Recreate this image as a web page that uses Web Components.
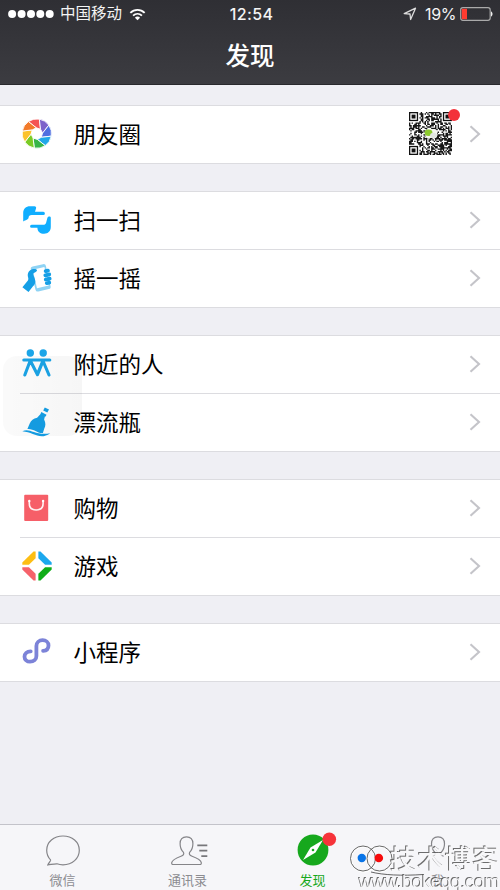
<!DOCTYPE html>
<html lang="zh-CN">
<head>
<meta charset="utf-8">
<title>发现</title>
<style>
html,body{margin:0;padding:0}
body{width:500px;height:890px;overflow:hidden;font-family:"Liberation Sans","Noto Sans CJK SC",sans-serif;background:#efeff4}
</style>
</head>
<body>
<discover-app></discover-app>
<script>
const define = (name, html, setup) => customElements.define(name, class extends HTMLElement {
  connectedCallback() {
    if (this.shadowRoot) return;
    const t = document.createElement('template');
    t.innerHTML = html;
    this.attachShadow({mode: 'open'}).append(t.content.cloneNode(true));
    if (setup) setup(this, this.shadowRoot);
  }
});

const ICONS = {
  moments: ``,
  scan: `<path fill="#10aeff" d="M1.2 16.5V8C1.2 4 4 1.3 8 1.3h4.5c1.3 0 2 1 1.5 2.2l-1 3.3h8.3a1.6 1.6 0 0 1 0 3.2H9.7c-2 0-3.2 1.2-3.2 3.2-1.500 2-4 2.200-5.300 3.300z"/><path fill="#10aeff" d="M28.8 12.8v9.3c0 4-2.8 6.7-6.7 6.7-3.9 0-6.5-2-6.7-6H9.6a1.5 1.5 0 0 1 0-3.1h11.6c1.6 0 2.600-.8 3-2.300l1.200-4.600c.8-1.700 3.400-1.600 3.400 0z"/>`,
  shake: `<g transform="rotate(-13 19 15)"><rect x="11" y="2" width="15.500" height="25.500" rx="2.400" fill="#8fd3f4"/><rect x="12.800" y="5" width="12" height="19" fill="#fff"/></g><path fill="#159fe6" d="M.4 24.2l5.500-6.800c.6-1 .5-2 .1-3.400-.8-3.200.5-6.500 3.600-7.500 2.800-.9 5.200-.3 5.400.8.2 1.200-1.700 1.900-3.200 2.800-1.200.8-.5 2 .5 4.300 1.700 4 1.100 6.400-1.300 8.800L6.500 29z"/><g stroke="#159fe6" stroke-width="3.700" stroke-linecap="round"><path d="M23.600 8.100l2.400-.5M23.300 12.400l4-.9M23.700 16.500l4-.9M24.700 20.200l2.600-.6"/></g>`,
  nearby: `<g fill="#1ba5e8"><circle cx="8.300" cy="4" r="3.700"/><circle cx="21.200" cy="4" r="3.700"/></g><path d="M1.800 11h26M8.500 11L2.800 26M8.500 12l7 13.700L21 12l6 14M20.800 12L15.500 25" fill="none" stroke="#1ba5e8" stroke-width="3.100" stroke-linecap="round" stroke-linejoin="round"/>`,
  bottle: `<path fill="#159fe6" d="M22.800 .4l4.200 2.200-1.700 3-4.100-2zM19.300 4.900l5.200 2.800-.8 1.900-.8-.1-.8 2.900c1.700 3.400 1.700 6.300.1 9.300l-1.300 4.300C15.800 27 12.300 21.500 5.400 22l2.200-5.200c1.400-3.500 3.900-5.400 7.500-6l3-3.300.4-.6z"/><path fill="#159fe6" d="M.3 24.300c7.500-4.200 12.400 4.600 27.900 1.900C18 33.600 11.800 25.300.3 24.300z"/>`,
  shop: `<rect x="2.200" y="1.700" width="24" height="26.300" rx="1" fill="#f65f68"/><path d="M7.300 8v2.500c0 4.200 2.900 6.500 6.900 6.500s6.900-2.300 6.900-6.500V8" fill="none" stroke="#fff3f3" stroke-width="1.600"/><circle cx="7.300" cy="8" r="1.200" fill="#fff"/><circle cx="21.100" cy="8" r="1.200" fill="#fff"/>`,
  games: `<path fill="#fdbe14" d="M11.500.4h2.100v6.800L6.900 13.700H.3v-2.200z"/><path fill="#1ca8ee" d="M18.500.4h-2.100v6.800l6.700 6.500h6.600v-2.200z"/><path fill="#f6626b" d="M11.500 29.600h2.100v-6.800L6.900 16.300H.3v2.200z"/><path fill="#10ad18" d="M18.500 29.600h-2.100v-6.800l6.700-6.500h6.600v2.200z"/>`,
  mini: `<path d="M8.700 14.300C4.900 14.400 2.500 16.500 2.500 19.700c0 3 2.500 5 5.500 5 3.800 0 6.400-2.200 6.400-5.700V9c0-3.300 2.700-5.800 6.200-5.800 3.300 0 5.900 2.100 5.900 5.200 0 3.200-2.200 5.200-5.400 5.500" fill="none" stroke="#7c83d8" stroke-width="3.800" stroke-linecap="round"/>`
};

define('status-bar', `<style>
:host{display:grid;grid-template-columns:1fr auto 1fr;align-items:center;height:28px;color:#f4f4f4;font:15.5px/28px Inter,"Noto Sans CJK SC",sans-serif}
div{display:flex;align-items:center}
.l{padding-left:8px}.r{justify-content:flex-end;padding-right:7px}
b{font-weight:500;font-size:16px;letter-spacing:.4px;padding-left:3px}
svg{display:block;flex:none}.c{margin:0 7px 0 6px}.p{margin:0 4px 0 8px;font-size:16px;letter-spacing:-.4px}
</style>
<div class="l"><svg width="46" height="10" fill="#fff"><circle cx="4.100" cy="5" r="4"/><circle cx="13.600" cy="5" r="4"/><circle cx="23" cy="5" r="4"/><circle cx="32.300" cy="5" r="4"/><circle cx="41.700" cy="5" r="4"/></svg>
<span class="c">中国移动</span><svg width="17" height="13" viewBox="0 0 18 14" fill="none" stroke="#fff" stroke-width="2"><path d="M1.300 5.200C5.700.9 12.300.9 16.700 5.200M4.200 8.200c2.800-2.600 6.800-2.600 9.600 0"/><path d="M6.200 10.400c1.600-1.500 4-1.500 5.600 0L9 13.200z" fill="#fff" stroke="none"/></svg></div>
<b>12:54</b>
<div class="r"><svg width="14" height="14" viewBox="0 0 14 14"><path d="M1.200 6.600L12.500 1.200 7.600 12.500 7 7z" fill="none" stroke="#ddd" stroke-width="1.300" stroke-linejoin="round"/></svg><span class="p">19%</span><svg width="33" height="14"><rect x=".7" y=".7" width="29.500" height="12.600" rx="2.200" fill="none" stroke="#aaa" stroke-width="1.200"/><rect x="1.800" y="1.800" width="5.200" height="10.400" fill="#ff3b30"/><path d="M31 4.500c2 .5 2 4.500 0 5z" fill="#eee"/></svg></div>`);

define('nav-header', `<style>
:host{display:block;height:85px;background:linear-gradient(#2f2f34,#3c3c41);box-sizing:border-box;box-shadow:inset 0 -1px #29292d}
h1{margin:0;color:#fff;text-align:center;font:500 24.5px/54px "Noto Sans CJK SC",sans-serif}
</style><status-bar></status-bar><h1><slot></slot></h1>`);

define('cell-group', `<style>
:host{display:flex;flex-direction:column;background:#fff;border:solid #dcdce0;border-width:1px 0;box-sizing:border-box}
</style><slot></slot>`);

define('list-cell', `<style>
:host{display:flex;align-items:center;box-sizing:border-box;height:57px;padding:0 19px 2px 22px}
:host([next]){height:58px;padding-bottom:0;background:linear-gradient(#dcdce0,#dcdce0) 20px 0/480px 1px no-repeat}
.i{width:30px;height:30px;flex:none;overflow:visible}
.t{flex:1;padding:0 0 2px 21.5px;font:22.5px/52px "Noto Sans CJK SC",sans-serif;color:#000}
.a{width:12px;height:18px;flex:none;margin-left:16px}
</style><svg class="i" viewBox="0 0 30 30"></svg><span class="t"><slot></slot></span><slot name="extra"></slot>
<svg class="a" viewBox="0 0 12 18"><path d="M1.500 1.200L10 9l-8.500 7.800" fill="none" stroke="#c4c4c9" stroke-width="2.100"/></svg>`, (el, root) => {
  const svg = root.querySelector('.i'), name = el.getAttribute('icon');
  svg.innerHTML = ICONS[name];
  if (name === 'moments') {
    const colors = ['#f45454','#7d62ca','#4f6fe0','#20a8e8','#38b548','#7acb25','#fbc22c','#f27a2a'];
    const p = (r, a) => { const q = a * Math.PI / 180; return (14.8 + r * Math.cos(q)).toFixed(2) + ' ' + (14.6 + r * Math.sin(q)).toFixed(2); };
    svg.innerHTML = colors.map((c, i) => {
      const a = -125 + i * 45;
      return `<path fill="${c}" stroke="#fff" stroke-width=".9" d="M${p(14.7, a)}A14.700 14.700 0 0 1 ${p(14.7, a + 45)}L${p(5.8, a + 75)}L${p(5.8, a + 30)}Z"/>`;
    }).join('');
  }
});

define('qr-thumb', `<style>
:host{display:block;position:relative;width:43px;height:43px;margin-right:1px}
svg{display:block}i{position:absolute;right:-8px;top:-3px;width:12px;height:12px;border-radius:50%;background:#f3313a}
</style><svg width="43" height="43" viewBox="0 0 33 33"></svg><i></i>`, (el, root) => {
  const n = 33; let s = 4711, d = '';
  for (let y = 0; y < n; y++) for (let x = 0; x < n; x++) {
    s = (s * 1103515245 + 12345) % 2147483648;
    const corner = (x < 8 && y < 8) || (x > 24 && y < 8) || (x < 8 && y > 24);
    if (!corner && (s >> 12) % 100 < 56) d += `M${x} ${y}h1.050v1.050h-1.050z`;
  }
  const eye = (x, y) => `<path d="M${x} ${y}h7v7h-7z" fill="#111"/><path d="M${x+1} ${y+1}h5v5h-5z" fill="#fff"/><path d="M${x+2} ${y+2}h3v3h-3z" fill="#111"/>`;
  root.querySelector('svg').innerHTML = `<path d="${d}" fill="#161616"/>${eye(0,0)}${eye(26,0)}${eye(0,26)}<rect x="12.500" y="13" width="9" height="7" rx="2" fill="#f4f6f0"/><ellipse cx="15" cy="16" rx="3" ry="2.500" fill="#8cc92e"/><ellipse cx="18.800" cy="18" rx="2.600" ry="2" fill="#e2e6e2"/>`;
});

const TABS = {
  chat: `<path d="M6.800 28.200C4.200 25.500 2.700 22.200 2.700 18.200 2.700 9.900 9.800 4 19 4s16.300 6 16.300 14.200S28.200 32.800 19 32.800c-2.200 0-4.200-.3-6-1-2.200-.2-5.300.6-9.200 1.200.5-1.500 2-3.100 3-4.800" fill="none" stroke="#858589" stroke-width="1.200"/>`,
  contacts: `<path d="M17.500 4.800c4 0 6.400 2.600 6.400 7 0 4-1.500 6.800-3.300 8.600-.8 1.900.1 2.900 2.500 3.800 5.600 2 8.700 3.500 9.200 6.500.1 1.300-.3 1.800-1.600 1.800H4.300c-1.300 0-1.700-.5-1.600-1.800.5-3 3.800-4.500 9.300-6.500 2.400-.9 3.300-1.900 2.500-3.800-1.900-1.800-3.400-4.600-3.400-8.600 0-4.400 2.500-7 6.400-7z" fill="none" stroke="#858589" stroke-width="1.200"/><path d="M28.300 13.300h10M30.300 18.700h8M32.300 24.200h6" stroke="#77777b" stroke-width="1.700"/>`,
  compass: `<circle cx="19" cy="18" r="15.400" fill="#16a81d"/><path d="M29 8L21.500 20.500 9 28l7.500-12.500z" fill="#fff"/><circle cx="19" cy="18" r="1.300" fill="#16a81d"/><circle cx="35.300" cy="7.300" r="6.800" fill="#f6333a"/>`,
  me: `<path d="M19 4.800c4.200 0 6.500 2.700 6.500 7 0 4-1.500 6.800-3.400 8.600-.7 1.900.1 3 2.500 3.800M19 4.800c-4.200 0-6.500 2.700-6.500 7 0 4 1.500 6.800 3.400 8.600.7 1.900-.1 3-2.500 3.800" fill="none" stroke="#858589" stroke-width="1.200"/>`
};
define('tab-item', `<style>
:host{display:flex;flex-direction:column;align-items:center;flex:1;color:#8c8c91}
:host([active]){color:#16a81d}
svg{width:38px;height:38px;margin-top:7px;overflow:visible}
span{font:13px/18px "Noto Sans CJK SC",sans-serif;margin-top:1px}
</style><svg viewBox="0 0 38 38"></svg><span><slot></slot></span>`, (el, root) => { root.querySelector('svg').innerHTML = TABS[el.getAttribute('icon')]; });

define('tab-bar', `<style>
:host{display:flex;height:66px;box-sizing:border-box;border-top:1px solid #c3c3ca;background:#f6f6f9}
</style><slot></slot>`);

define('site-watermark', `<style>
:host{position:absolute;left:349px;top:840px;width:151px;height:50px;display:block}
svg{display:block;overflow:visible}
.e{fill:#f8f8fa;filter:drop-shadow(-1px -1px 0 #555);opacity:.85}
</style><svg width="151" height="50">
<g fill="none" stroke="#fff" stroke-width="2"><circle cx="14.500" cy="19" r="12.500"/><circle cx="30.500" cy="19" r="12.500"/></g>
<g fill="none" stroke="#555" stroke-width=".9"><circle cx="14" cy="18.500" r="12.500"/><circle cx="30.500" cy="18.500" r="12.500"/><path d="M22 32c12 3 31 4 52 2.500"/></g>
<circle cx="12.800" cy="18" r="4.200" fill="#0874e8"/><circle cx="29.800" cy="18" r="4.300" fill="#f60b0b"/>
<text class="e" x="41" y="28.500" font-family="Noto Sans CJK SC,sans-serif" font-size="26.500" font-weight="500" textLength="109">技术博客</text>
<text class="e" x="10" y="48" font-family="Liberation Sans,sans-serif" font-size="19" textLength="141">www.bokeqq.com</text>
</svg>`);

define('assistive-shade', `<style>
:host{display:block;position:absolute;left:3px;top:356px;width:79px;height:80px;border-radius:14px;background:linear-gradient(90deg,rgba(0,0,0,.018),rgba(0,0,0,.035));pointer-events:none}
</style>`);

define('discover-app', `<style>
:host{display:flex;flex-direction:column;width:500px;height:890px;position:relative;overflow:hidden;background:#efeff4}
main{flex:1;display:flex;flex-direction:column;gap:27px;padding-top:20px}
</style>
<nav-header>发现</nav-header>
<main>
<cell-group><list-cell icon="moments">朋友圈<qr-thumb slot="extra"></qr-thumb></list-cell></cell-group>
<cell-group><list-cell icon="scan">扫一扫</list-cell><list-cell next icon="shake">摇一摇</list-cell></cell-group>
<cell-group><list-cell icon="nearby">附近的人</list-cell><list-cell next icon="bottle">漂流瓶</list-cell></cell-group>
<cell-group><list-cell icon="shop">购物</list-cell><list-cell next icon="games">游戏</list-cell></cell-group>
<cell-group><list-cell icon="mini">小程序</list-cell></cell-group>
</main>
<tab-bar><tab-item icon="chat">微信</tab-item><tab-item icon="contacts">通讯录</tab-item><tab-item icon="compass" active>发现</tab-item><tab-item icon="me">我</tab-item></tab-bar>
<assistive-shade></assistive-shade>
<site-watermark></site-watermark>`);
</script>
</body>
</html>
